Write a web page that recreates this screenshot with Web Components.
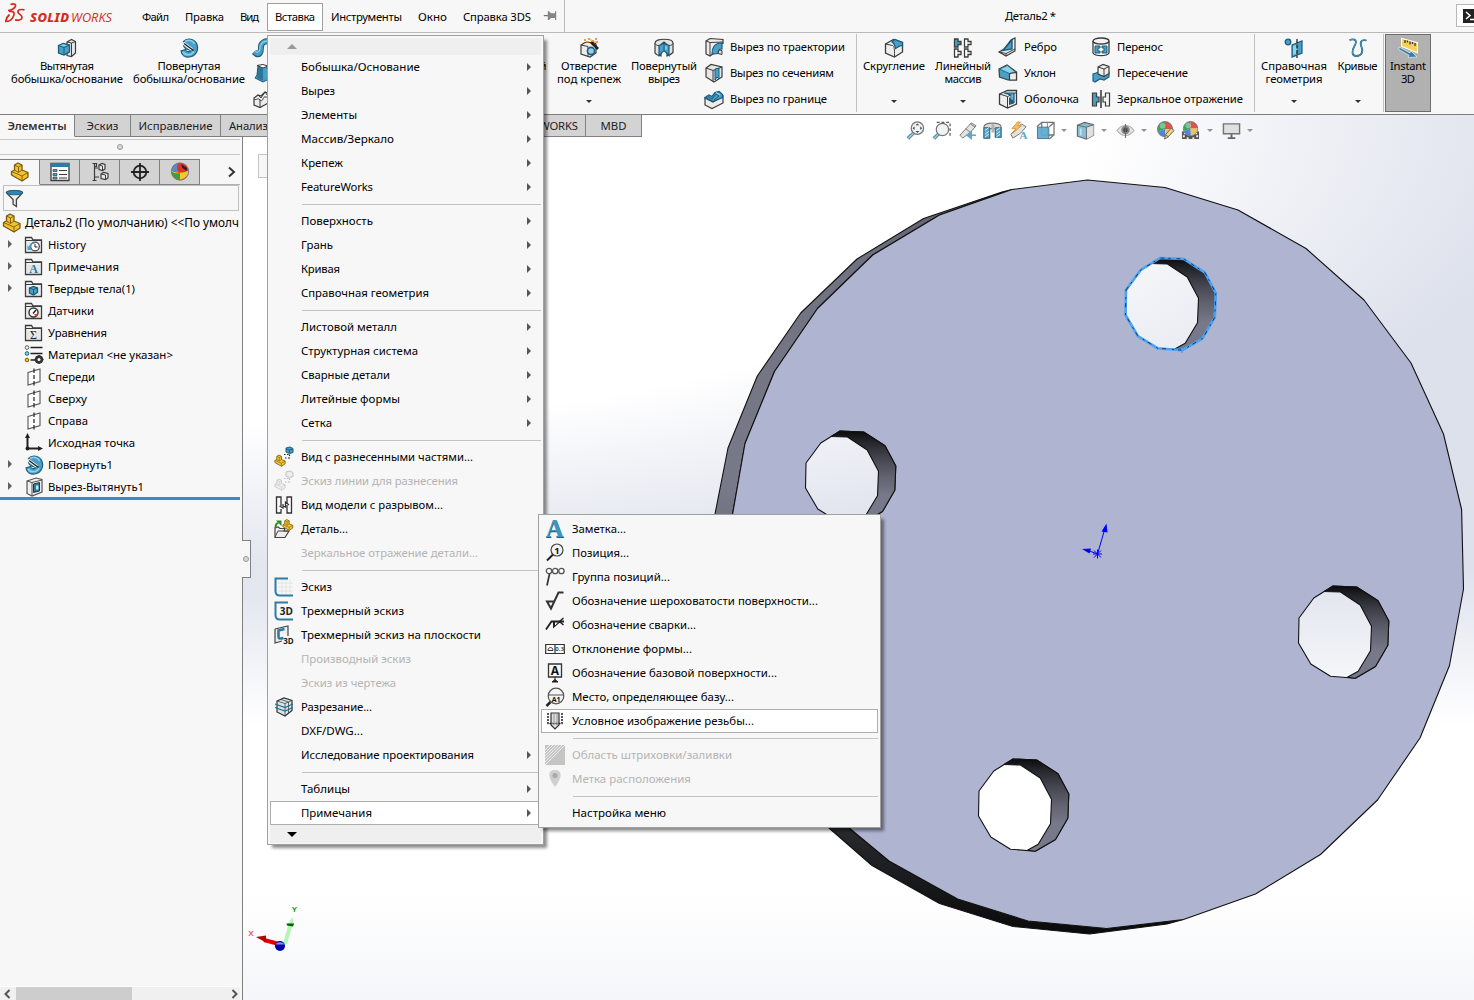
<!DOCTYPE html>
<html lang="ru">
<head>
<meta charset="utf-8">
<title>SOLIDWORKS</title>
<style>
html,body{margin:0;height:100%;overflow:hidden}
body{font:12px/16px "Noto Sans","Open Sans",sans-serif;color:#000;background:#f7f7f7}
</style>
</head>
<body>
<cad-window></cad-window>
<script>
const B='#4a9fc6',D='#1d5c7c',L='#8fd0ea',K='#3c3c3c',Y='#f2c230',YD='#7a5b10';
const folder=(inner)=>`<path d="M1.500 17.500V2.500h6l1.500 2.500h8.500v12.500z" fill="#f2f2f2" stroke="${K}" stroke-width="1.300"/><path d="M2 5.500h15" stroke="${K}"/><path d="M3 7.500h13v8.500H3z" fill="#e6e6e6"/>${inner}`;
const plane=`<path d="M4 5.500L16 2v12.500L4 18z" fill="#fdfdfd" stroke="#555" stroke-width="1.100"/><path d="M10 1.500v17.500" stroke="#222" stroke-width="1.200" stroke-dasharray="4.500 2 4 2"/>`;
const part=(s,t,c=Y,d=YD)=>`<g transform="translate(${t}) scale(${s})"><path d="M1.500 9.500L4.500 8V3L8 1l4 2v5l6 2.500v4.500l-6 4L1.500 13z" fill="${c}" stroke="${d}" stroke-width="1.300" stroke-linejoin="round"/><path d="M4.500 3L8.500 5l3.500-2M8.500 5v5.500l-4-2.500M1.500 9.500L12 14v5M12 14l6-3.500M8.500 10.500l3.500-2.500" fill="none" stroke="${d}" stroke-width=".9"/></g>`;
const revolve=`<path d="M4.500 3.500C8-.5 16 .5 18 6.500c2 6-1.500 12-7.500 12.500-4.500.4-8-2-8.500-6l4.500-1.500c.5 2.500 4.500 3 6 .5-3 .5-7.500-1.500-8-4.500z" fill="${B}" stroke="${D}" stroke-width="1.200"/><path d="M6 3.500c4-2.500 8-1 9.500 2.500M4 14c2 3.500 9 4 11-1" fill="none" stroke="${L}" stroke-width="1.600"/><path d="M4 5l9 6.500" stroke="#fff" stroke-width="2.800"/><path d="M5 5.500l9.500 7" stroke="#222" stroke-width="1.500"/>`;
const ball=`<circle cx="9.500" cy="9.500" r="8" fill="#ddd"/><path d="M9.500 9.500V1.500A8 8 0 0 0 2 12z" fill="#2a9a4a"/><path d="M9.500 9.500L2 12a8 8 0 0 0 8 5.500z" fill="#3f78d8"/><path d="M9.500 9.500V1.500a8 8 0 0 1 8 8z" fill="#de4238"/><path d="M9.500 9.500h8a8 8 0 0 1-7.500 8z" fill="#e8c050"/><circle cx="9.500" cy="9.500" r="8" fill="none" stroke="#666" stroke-width=".8"/><circle cx="7" cy="6" r="3" fill="#fff" opacity=".35"/>`;
const lens=(x,y,r)=>`<path d="M2 18.500l6-6" stroke="#39718d" stroke-width="3.600"/><path d="M2 18.500l6-6" stroke="#8cc0d8" stroke-width="1.800"/><circle cx="${x}" cy="${y}" r="${r}" fill="#edf2f4" stroke="#666" stroke-width="1.300"/>`;
const lettr=(t,x,y,s,c,w=700,f='Liberation Sans')=>`<text x="${x}" y="${y}" font-family="${f}" font-size="${s}" font-weight="${w}" text-anchor="middle" fill="${c}">${t}</text>`;
const ICONS={
extrude:`<path d="M10 4l4.500-2.500 4 2V15l-4 3.500-4.500-1z" fill="#e8e8e8" stroke="${K}" stroke-width="1.200"/><path d="M14.500 5v13M14.500 5l4-1.500M10 4l4.500 1" stroke="${K}" fill="none"/><path d="M1.500 7.500L6 5.500l6.500 1.500v7L7 17l-5.500-2z" fill="${B}" stroke="${D}" stroke-width="1.300"/><path d="M1.500 7.500L7 9.500 12.500 7M7 9.500V17" stroke="${D}" fill="none"/><path d="M3 7.400l3-1.200 4.500 1L7 8.600z" fill="${L}"/>`,
revolve,
sweep:`<path d="M2 15c6 6 7-1 7-5s4-7 9-5" fill="none" stroke="${D}" stroke-width="6"/><path d="M2.500 15c5.500 5 6.500-1 6.500-5s4-7 8.500-5" fill="none" stroke="${B}" stroke-width="4"/><path d="M3 14c4 3 5-1 5-4s4-7 9-6" fill="none" stroke="${L}" stroke-width="1.200"/>`,
loft:`<path d="M6 3h9l1 9 3 3-8 4-8-4 2-3z" fill="${B}" stroke="${D}"/><path d="M11 4v14l-6-3 1-11z" fill="${D}" opacity=".6"/><path d="M5 2.500l6-1 5 1.500-5 2z" fill="#fff" stroke="${K}"/>`,
boundary:`<path d="M2 9l4-3 3 1 4-4 5 2v8L8 18.500 2 16z" fill="#ededed" stroke="${K}" stroke-width="1.200"/><path d="M2 10c3 2 3-2 6 1s3-4 5-3 3-2 5-2M8 11v7M6 6l3 3 4-6 3 4" fill="none" stroke="${K}"/>`,
wizard:`<path d="M2 7l4-2.500h9l2 1.500v9L11 19l-9-3z" fill="#ececec" stroke="${K}" stroke-width="1.200"/><path d="M2 7l7 1.500V18" fill="none" stroke="${K}"/><circle cx="12" cy="13" r="3.600" fill="${L}" stroke="${D}" stroke-width="1.600"/><path d="M12 4l7 7" stroke="#222" stroke-width="2.800"/><path d="M5 2h2M9 1h2M13 3h2M16 1h2M7 4h3M17 4h2" stroke="#ea7a16" stroke-width="1.600"/><path d="M11 2h2M15 4h2" stroke="${Y}" stroke-width="1.500"/>`,
revcut:`<path d="M1 5c0-5 18-5 18 0v9.500c-2 2-4 3-6 3.500V6.500l-3-2.500-3 2.500V18c-3-.5-5-1.500-6-3z" fill="#e3e3e3" stroke="${K}" stroke-width="1.200"/><path d="M5 7.500l5-2 5 2v10l-5-5-5 5z" fill="${B}" stroke="${D}" stroke-width="1.200"/><path d="M10 5.500v7" stroke="${D}"/><path d="M12 8v4" stroke="${L}" stroke-width="1.500"/><path d="M1 5.500c1 1.500 2 2 4 2.200M19 5.500c-1 1.500-2 2-4 2.200" stroke="${K}" fill="none"/>`,
sweepcut:`<path d="M2 4l4-2.500 13 1v4c-5 0-8 4-8 9L6 19l-4-2z" fill="#ececec" stroke="${K}" stroke-width="1.200"/><path d="M2 4l4 1.500L19 5M6 5.500V19" fill="none" stroke="${K}"/><path d="M8 17c0-6 2-11 10-11v6c-3 0-4 1-4 4.500z" fill="${B}" stroke="${D}" stroke-width="1.200"/><path d="M15 13l3 .5v4l-4-1z" fill="#ddd" stroke="${K}"/>`,
loftcut:`<path d="M2 5l5-3.500L18 4v10l-8 5-8-5z" fill="#e6e6e6" stroke="${K}" stroke-width="1.200"/><path d="M2 5l7 2.500v11M9 7.500L18 4" fill="none" stroke="${K}"/><path d="M11 6l4-1v11l-2-2-2 3z" fill="${B}" stroke="${D}"/>`,
boundcut:`<path d="M1 9l8 4 10-6v7L8 19.500 1 16z" fill="#ececec" stroke="${K}" stroke-width="1.200"/><path d="M1 8.500l4-2.500 3 1.500 3-4 4-1 3.500 3v3L9 12.500z" fill="${B}" stroke="${D}" stroke-width="1.300"/><path d="M4 7.500l4 2.500 4-5 3 2-5 4" stroke="${D}" fill="none"/><path d="M12 3.500l4 2.500" stroke="${L}" stroke-width="1.300"/>`,
fillet:`<path d="M1.500 6l8-4.500 9 3V14l-8 5-9-4z" fill="#eee" stroke="${K}" stroke-width="1.300"/><path d="M1.500 6l7 1.500c2 1 2 3 2 11" fill="none" stroke="${K}"/><path d="M8 4l3-2.500 7.500 3v4.500c-.5-3-3-1-7 1.500-.5-3-1-5-3.500-6.500z" fill="${B}" stroke="${D}" stroke-width="1.200"/>`,
pattern:[[0,0,B],[10,0,'#fff'],[0,10,'#fff'],[10,10,'#fff']].map(([x,y,c])=>`<path transform="translate(${x} ${y}) " d="M1.500 1h3.500v2.500h3v3h-3v2.500h-3.500z" fill="${c}" stroke="${K}" stroke-width="1.300"/>`).join(''),
rib:`<path d="M1 15l5-3 7-9 4-2v13l-9 5z" fill="#eee" stroke="${K}" stroke-width="1.200"/><path d="M5 13.500L14 3v9z" fill="${B}" stroke="${D}" stroke-width="1.400"/><path d="M1 15l7 1.500 9-4.500M8 16.500V19" fill="none" stroke="${K}"/>`,
draft:`<path d="M1 6l8-4 9.500 7V17H10L1.500 14z" fill="${B}" stroke="${K}" stroke-width="1.200"/><path d="M1.500 6l8-3.500 8.500 7-6.500 1z" fill="${L}" stroke="${D}" stroke-width=".8"/><path d="M11.500 10.500l7-1V17h-7z" fill="#ededed" stroke="${K}" stroke-width="1.200"/>`,
shell:`<path d="M1.500 5l8-3.500h9V15l-9 4-8-4z" fill="#eee" stroke="${K}" stroke-width="1.300"/><path d="M1.500 5l8 2.500V19M9.500 7.500l9-4" stroke="${K}" fill="none"/><path d="M6 4h10v9l-3-1.500V6z" fill="${B}" stroke="${D}" stroke-width="1.200"/><path d="M11 8l5 4.500v2l-5 1.500z" fill="${D}"/><path d="M14 5.500v5" stroke="${L}"/>`,
wrap:`<ellipse cx="10" cy="4" rx="8" ry="3" fill="#f4f4f4" stroke="${K}" stroke-width="1.300"/><path d="M2 4v12c2 3.500 14 3.500 16 0V4" fill="none" stroke="${K}" stroke-width="1.300"/><path d="M4 9h5v2H7v3h2v2H4zM11 9h5v7h-5v-2h2v-3h-2z" fill="${B}" stroke="${D}"/>`,
intersect:`<path d="M2 11l9-3 7 1v5l-5 3-4-1-5 3-2-1z" fill="${B}" stroke="${D}" stroke-width="1.200"/><path d="M7 4l5-2.500 6 2v7l-5 3-6-2.500z" fill="#eee" stroke="${K}" stroke-width="1.200"/><path d="M7 4l6 2 5-2.500M13 6v7" stroke="${K}" fill="none"/>`,
mirror:`<path d="M1.500 4h4v4h2.500v5H5.500v4h-4z" fill="${B}" stroke="${K}" stroke-width="1.200"/><path d="M18.500 4h-4v4H12v5h2.500v4h4z" fill="#f4f4f4" stroke="${K}" stroke-width="1.200"/><path d="M10 1v18" stroke="#111" stroke-width="1.300"/>`,
refgeo:`<circle cx="4" cy="4" r="2.800" fill="${B}" stroke="${D}" stroke-width="1.300"/><path d="M8 7l10-4v12L8 19z" fill="${B}" stroke="${D}" stroke-width="1.200"/><path d="M9 8l4-1.500v9L9 17z" fill="${L}"/><path d="M13 1v19" stroke="#111" stroke-width="1.200" stroke-dasharray="4 1.500"/>`,
curves:`<path d="M1.500 2c6-2 8 1 5 6s-3 10 2 10 7-4 5-9 0-8 5-6.500" fill="none" stroke="${D}" stroke-width="1.800"/><path d="M1.500 2c6-2 8 1 5 6s-3 10 2 10 7-4 5-9 0-8 5-6.500" fill="none" stroke="${B}" stroke-width="1"/>`,
instant:`<path d="M4 1l15 4v9L4 8z" fill="${Y}" stroke="#fff" stroke-width="2"/><path d="M4 1l15 4v9L4 8z" fill="#f7d25a"/><path d="M7 2v3M9.500 2.500v2M12 3.500v3M14.500 4v2M17 5v3" stroke="#333" stroke-width="1.300"/><path d="M1 9l11 6 .8-2L19 19l-9 .5 1-2.200L1 11.500z" fill="#2f7fa8" stroke="#fff" stroke-width=".6"/>`,
zfit:lens(12,7.500,6.500)+`<path d="M12 2.500l2 2h-4zM12 12.500l2-2h-4zM7 7.500l2-2v4zM17 7.500l-2-2v4z" fill="#333"/>`,
zarea:lens(11,9,6.500)+`<path d="M5 1.500h14v14" fill="none" stroke="#444" stroke-width="1.300" stroke-dasharray="3 2"/>`,
prev:`<path d="M2 15L14 2l5 3-6 7-8 6z" fill="#e1e1e1" stroke="#666"/><path d="M8 8l5 4M13 3l5 3.500" stroke="#666"/><path d="M19 15h-6M14 11.500l-4.500 3.500 4.500 3.500z" stroke="${B}" fill="${B}" stroke-width="1.500"/>`,
section:`<path d="M1 6c1-5 17-5 18 0v11h-6V8H7v10H1z" fill="#d8d8d8" stroke="#666" stroke-width="1.200"/><path d="M1 7h6v11H1zM13 7h6v10h-6z" fill="${B}" stroke="${D}"/><path d="M2 10l4-3M2 14l4-3M2 17l4-3M14 10l4-3M14 14l4-3M14 17l4-3" stroke="#d7eef8"/><path d="M9 3l3 1v8H9z" fill="#aaa"/>`,
views:`<path d="M2 14L13 3l5 3-6 7-8 5z" fill="#e1e1e1" stroke="#666"/><path d="M9 1L3 8h4l-3 5 9-8H9l3-4z" fill="#f7b84a" stroke="#cf7e17" stroke-width=".8"/>`+lettr('A',15,18.5,12,B,700,'Liberation Serif'),
orient:`<path d="M6 6V1.500h13v13h-5M14 6l5-4.500M1 6l5-4.500M14 19l5-4.500" fill="none" stroke="#666" stroke-width="1.300"/><path d="M12 1.500v13M6 5v10h12" stroke="#777" fill="none"/><path d="M1.500 6.500h12v12h-12z" fill="${B}" stroke="${D}" opacity=".9"/>`,
display:`<path d="M1.500 4.500L9 1.500l9.500 2.500v11L11 19l-9.500-3z" fill="#7fb9d4" stroke="#555" stroke-width="1.200"/><path d="M11 6.500V19l7.500-4V4z" fill="#ddd"/><path d="M1.500 4.500L11 6.500l7.500-2.500M11 6.500V19" stroke="#555" fill="none"/><path d="M5 8v7" stroke="#b6e1f2" stroke-width="2"/>`,
eye:`<path d="M1 10c5-7 13-7 18 0-5 7-13 7-18 0z" fill="#e4e4e4" stroke="#aaa" stroke-width="1.200"/><circle cx="10" cy="9.500" r="4.500" fill="#777"/><circle cx="10" cy="9.500" r="2.300" fill="#333"/><path d="M10 3v15" stroke="#555"/>`,
appear:`<g transform="translate(0 -1)">${ball}</g><path d="M9 19l1-4.500 6-7 3 2.500-6.500 7z" fill="#f0d078" stroke="#555"/><path d="M10 14l3 3" stroke="#555"/>`,
scene:`<path d="M1 11h18v8H1z" fill="#444"/><path d="M3 13h2M15 13h2M2 16h2M6 18h2M12 18h2M16 16h2" stroke="#eee" stroke-width="2"/><g transform="translate(1 -1) scale(.95)">${ball}</g>`,
monitor:`<path d="M1.500 3h17v10.500h-17z" fill="#dedede" stroke="#666" stroke-width="1.500"/><path d="M10 14v3M6 18h8" stroke="#555" stroke-width="2"/>`,
part:part(1,'0 0'),
props:`<path d="M1 1.500h18v17H1z" fill="#fafafa" stroke="${K}" stroke-width="1.300"/><path d="M1 1h18v4H1z" fill="#2f7ba4"/><path d="M3 7.500h4v2H3zM3 11.500h4v2H3zM3 15h4v2H3z" fill="${B}" stroke="${K}" stroke-width=".7"/><path d="M9 8.500h8M9 12.500h8M9 16h8" stroke="${K}" stroke-width="1.200"/>`,
config:`<path d="M4.500 1v17.500M4.500 6H8M4.500 15H9M2.500 1.500h4v3h-2M2.500 18.500h4" stroke="${K}" stroke-width="1.200" fill="none"/><path d="M9 3l3-1.500 3 1V7l-2.500 1.500L9 7.500zM11 12l2.500-1.500 4.500 1v4.500l-2.500 1.500-4.500-1z" fill="#e8e8e8" stroke="${K}" stroke-width="1.200"/><path d="M9 3l3.500 1V8M11 12l4.500 1V17" stroke="${K}" fill="none"/>`,
target:`<circle cx="10" cy="10" r="6.300" fill="none" stroke="#222" stroke-width="1.800"/><path d="M10 1v18M1 10h18" stroke="#222" stroke-width="1.800"/>`,
ball:`<circle cx="10" cy="9.500" r="8.700" fill="#e33026"/><path d="M1.500 8.500c5 3 11 3 17 0a8.700 8.700 0 0 1-17 3z" fill="#f1cc28"/><path d="M1.500 9.500c3 2 6 2 8.500 1.500V18a8.700 8.700 0 0 1-8.500-8.500z" fill="#3f9e3a"/><path d="M1.500 8a8.700 8.700 0 0 1 7-7c-2 3-2 6 0 9-3 0-5 0-7-2z" fill="#4a8fd0"/><path d="M11 2l6 4-.5 3-4-3z" fill="#222"/><circle cx="10" cy="9.500" r="8.700" fill="none" stroke="#777" stroke-width=".8"/>`,
filter:`<path d="M1.500 4c0-3 17-3 17 0l-6.500 7v7.500L8.500 16v-5z" fill="#eee" stroke="#444" stroke-width="1.400"/><ellipse cx="10" cy="3.800" rx="8.500" ry="2.300" fill="#2f88b3" stroke="${D}"/>`,
fhist:folder(`<circle cx="11" cy="11.500" r="4.300" fill="#fff" stroke="#444" stroke-width="1.200"/><path d="M11 9v3h2.500" stroke="#222" fill="none"/><path d="M3.500 10.500v4.500h5z" fill="${B}"/><path d="M5.500 12.500c1-4.500 3-4.500 5-4.500" stroke="${B}" stroke-width="1.700" fill="none"/>`),
fnote:folder(lettr('A',9.5,16,12,'#2a7ba3',700,'Liberation Serif')),
fsolid:folder(`<path d="M5.500 9l4-1.500L13.500 9v4.500l-4 2.500-4-2z" fill="${B}" stroke="${D}" stroke-width="1.300"/><path d="M5.500 9l4 1.500 4-1.500M9.500 10.500V16" stroke="${D}" fill="none"/>`),
fsensor:folder(`<circle cx="9.500" cy="11.500" r="4.500" fill="#fff" stroke="#333" stroke-width="1.400"/><path d="M9 12.500l3-3.500" stroke="#222" stroke-width="1.500"/><path d="M10 13h4l-2 3z" fill="#e0401c"/>`),
fsum:folder(lettr('Σ',9.5,16,12,'#222',400,'Liberation Serif')),
material:`<path d="M6.500 2.500h12M6.500 8.500h12M6.500 15h5" stroke="#222" stroke-width="1.600"/><circle cx="3" cy="2.500" r="1.800" fill="#fff" stroke="#555"/><circle cx="3" cy="8.500" r="1.800" fill="${L}" stroke="${D}"/><circle cx="3" cy="15" r="1.800" fill="${Y}" stroke="${YD}"/><circle cx="15" cy="14.500" r="3" fill="none" stroke="#333" stroke-width="2.500"/><path d="M15 10v9M10.500 14.500h9M12 11.500l6 6M18 11.500l-6 6" stroke="#333" stroke-width="1.300"/><circle cx="15" cy="14.500" r="1.500" fill="#fff"/>`,
plane,
origin:`<path d="M3.500 16V3M3.500 15.500H16" stroke="#222" stroke-width="2" fill="none"/><path d="M3.500 0l2.500 5H1zM19 15.500l-5-2.500v5z" fill="#222"/><circle cx="3.500" cy="15.500" r="2" fill="#222"/>`,
cutx:`<path d="M3 4l9-3 6 1.500V15L8 19l-5-2.500z" fill="#efefef" stroke="#555" stroke-width="1.200"/><path d="M3 4l5 1.500L18 3M8 5.500V19" fill="none" stroke="#555"/><path d="M9.500 7l6-1.500v8.500l-6 1.500z" fill="#2f7ba4" stroke="#333"/><path d="M12 8.500h2.500v4H12z" fill="#bfe4f4"/>`,
explode:part(.62,'0 7.500')+`<path d="M12 1l4-1 3 1.500v4l-3.500 1L12 5z" fill="${B}" stroke="${D}"/><path d="M12 2l3.500 1L19 2M15.500 3v3" fill="none" stroke="${D}"/><path d="M10 7.500l5 0M15.500 7.500v4M11 11h4" stroke="#222" stroke-width="1.200" stroke-dasharray="1.500 1.500"/>`,
explodeoff:part(.62,'0 7.500','#f0f0f0','#c3c3c3')+`<path d="M12 1l4-1 3 1.500v4l-3.500 1L12 5z" fill="#eee" stroke="#c3c3c3"/><path d="M10 7.500h5M15.500 7.500v4M11 11h4" stroke="#bbb" stroke-width="1.200" stroke-dasharray="1.500 1.500"/>`,
breakv:`<path d="M7 11V2H2.500v16H7v-4M13 8V2h4.500v16H13v-8" fill="#fafafa" stroke="#333" stroke-width="1.300"/><path d="M5.500 11l3.500 2V9M15 10l-3.500-3v5L9 11" fill="none" stroke="#333" stroke-width="1.200"/>`,
insert:`<path d="M1 18V9l3-1 2 1.500h5L10 12h5l-4 6.500H1z" fill="#eee" stroke="#444" stroke-width="1.200"/><path d="M1 18l3-6h10" fill="none" stroke="#444"/>`+part(.6,'8 0')+`<path d="M1.500 9c0-4 1-5 3-5" stroke="#2e8b1d" stroke-width="2" fill="none"/><path d="M2 1.500h5.500V7z" fill="#2e8b1d"/>`,
sketch:`<path d="M8 2v15M12 2v15M16 2v15M4 6h15M4 10h15M4 14h15" stroke="#e0e0e0" stroke-width=".8"/><path d="M14 1.500H1.500V14c0 3 1.500 4.500 4.500 4.500h13" fill="none" stroke="#2c7ca6" stroke-width="2"/>`,
sketch3:`<path d="M14 1.500H1.500V14c0 3 1.500 4.500 4.500 4.500h13" fill="none" stroke="#2c7ca6" stroke-width="2"/>`+lettr('3D',12.3,14.2,10,'#222',700,'Open Sans'),
sketchp:`<path d="M1 4l13-3v10M1 4v14l7-2" fill="#eee" stroke="#444" stroke-width="1.200"/><path d="M10.500 4L4.500 5.500v6c0 2 1 2.500 5 1.500" fill="none" stroke="#2c7ca6" stroke-width="2.600"/>`+lettr('3D',14.5,19,8,'#222',700,'Open Sans'),
slice:`<path d="M3 4l7-3 8 2.500v10L11 19l-8-4z" fill="#d9e6ec" stroke="#333" stroke-width="1.200"/><path d="M3 4l8 2.500 7-3M11 6.500V19M7 2.500l7.500 2.500v12" fill="none" stroke="#444" stroke-width=".8"/><path d="M1 7l10 3.500L19 7M1 10.500L11 14l8-3.500" fill="none" stroke="#2c6c8c" stroke-width="1.300"/>`,
note:lettr('A',10,18.5,25,D,700,'Liberation Serif')+lettr('A',9.5,18,24.5,'#3f97bf',700,'Liberation Serif'),
balloon:`<circle cx="12" cy="7" r="6" fill="#f3f3f3" stroke="#444" stroke-width="1.200"/><path d="M8 11.500L2 17.500" stroke="#222" stroke-width="2"/>`+lettr('1',12,10.5,9.5,'#111',700,'Open Sans'),
balloons:`<circle cx="4" cy="4" r="2.700" fill="#fff" stroke="#555" stroke-width="1.300"/><circle cx="10.200" cy="4" r="2.700" fill="#fff" stroke="#555" stroke-width="1.300"/><circle cx="16.400" cy="4" r="2.700" fill="#fff" stroke="#555" stroke-width="1.300"/><path d="M4.500 7L2 18.500" stroke="#333" stroke-width="1.700"/>`,
rough:`<path d="M18.500 1.500h-5L6 17.500 2 10.500h7" fill="none" stroke="#333" stroke-width="2"/>`,
weld:`<path d="M1 14.500L6.500 6.500H19" fill="none" stroke="#222" stroke-width="1.800"/><path d="M8 6.500v7l8-7z" fill="#222"/><path d="M10 7.500v3l3-3z" fill="#f7f7f7"/><path d="M18.500 3l-4 3.500 4 3.500" fill="none" stroke="#222" stroke-width="1.500"/>`,
gtol:`<path d="M.700 5.500h18.600v9H.700zM10 5.500v9" fill="#fafafa" stroke="#333" stroke-width="1.200"/><path d="M3 11.500c0-4 5-4 5 0z" fill="none" stroke="#333"/>`+lettr('0.3',14.6,12.4,6,'#222',600,'Open Sans'),
datum:`<path d="M3.500 1h13v13h-13z" fill="#fafafa" stroke="#333" stroke-width="1.300"/><path d="M10 14v3M7 19h6L10 16.500z" stroke="#222" fill="#222"/>`+lettr('A',10,11.8,12,'#111',700,'Open Sans'),
dtarget:`<path d="M5.500 15L1.500 19" stroke="#222" stroke-width="2.500"/><circle cx="11" cy="9" r="7.800" fill="#f4f4f4" stroke="#555" stroke-width="1.200"/><path d="M3.200 8h15.600" stroke="#555"/>`+lettr('A1',11.2,14.8,7,'#111',700,'Open Sans'),
thread:`<path d="M6 2h8v12l-4 4-4-4z" fill="#ddd" stroke="#333" stroke-width="1.200"/><path d="M3 2v10.500h14V2" fill="none" stroke="#222" stroke-width="1.500" stroke-dasharray="2 1"/><path d="M9 3v11M12 3v11" stroke="#999"/>`,
hatch:`<path d="M0 0h20v20H0z" fill="#c5c5c5"/><path d="M0 8l8-8M0 11L11 0M0 14L14 0M0 17L17 0M0 5l5-5M0 20L20 0" stroke="#ececec"/>`,
pinmap:`<path d="M10 1c8 0 7 8 0 17C3 9 2 1 10 1z" fill="#cfcfcf"/><circle cx="10" cy="6.500" r="2.600" fill="#aaa"/>`,
pin:`<path d="M1 9.500h6" stroke="#777" stroke-width="1.600"/><path d="M6 4v11h1.500l2.500-2.500h5V15h1.500V4H15v2.500h-5L7.500 4z" fill="#858585"/>`
};

const make=(name,html)=>customElements.define(name,class extends HTMLElement{
 connectedCallback(){ if(this.shadowRoot)return;
  const t=document.createElement('template');
  t.innerHTML=typeof html==='function'?html(this):html;
  this.attachShadow({mode:'open'}).appendChild(t.content.cloneNode(true));
 }});
const a=(e,n,d='')=>e.getAttribute(n)??d;
const ic=(n,s=20)=>`<cad-icon name="${n}" size="${s}"></cad-icon>`;
const ft=(t,w)=>`<fit-text w="${w}">${t}</fit-text>`;

make('cad-icon',e=>{const s=a(e,'size','20');return `<style>:host{display:block;flex:none;width:${s}px;height:${s}px}svg{display:block;overflow:visible}</style><svg width="${s}" height="${s}" viewBox="0 0 20 20">${ICONS[a(e,'name')]||''}</svg>`});

make('brand-logo',`<style>:host{display:flex;align-items:center;width:129px;height:32px;padding-left:5px;color:#d9281e;font-style:italic;font-size:13px}svg{margin-right:5px}.s{font-weight:800;margin-right:2px}.w{font-family:"Open Sans";font-weight:400}fit-text{margin-top:1px}</style>
<svg width="20" height="20" viewBox="0 0 20 20" style="margin-top:-6px"><g fill="none" stroke="#d9281e" stroke-width="1.700"><path d="M5.500 1.500c4-1.500 6 0 4.500 2.500S4.500 7.500 3 7.500"/><path d="M4 8.500c4.500-.8 6 1 4.500 4.500C7 17 3.500 18.500.8 18.500c0-3 1.500-5 3.700-7"/><path d="M19.500 6.800c-4-.8-7 0-6.500 2.500.3 1.500 4.500 3 4 5.500-.5 2.500-4 2.700-7 2"/></g></svg><fit-text class="s" w="39">SOLID</fit-text><fit-text class="w" w="41">WORKS</fit-text>`);

make('menu-entry',e=>`<style>:host{display:flex;align-items:center;padding:0 8px;height:28px;margin:3px 0 0}:host([open]){padding:0 7px;border:1px solid #a0a0a0;background:#fff;height:26px}</style>${ft(a(e,'label'),a(e,'w'))}`);

make('app-bar',`<style>:host{display:flex;height:32px;border-bottom:1px solid #bababa;background:#f7f7f7}
.pin{width:25px;border-right:1px solid #bababa;display:flex;align-items:center}.pin cad-icon{margin:0 0 1px 4px}
.title{display:flex;align-items:center;margin-left:440px;height:31px}.cmd{margin:4px 0 0 auto;width:17px;height:21px;border:1px solid #b8b8b8;border-right:0;background:#fff;display:flex;align-items:center;justify-content:flex-end}</style>
<brand-logo></brand-logo>
<menu-entry label="Файл" w="27"></menu-entry><menu-entry label="Правка" w="39"></menu-entry><menu-entry label="Вид" w="19"></menu-entry><menu-entry open label="Вставка" w="40"></menu-entry><menu-entry label="Инструменты" w="71"></menu-entry><menu-entry label="Окно" w="29"></menu-entry><menu-entry label="Справка 3DS" w="68"></menu-entry>
<div class="pin">${ic('pin',16)}</div><div class="title">${ft('Деталь2 *',51)}</div>
<div class="cmd"><svg width="11" height="14" viewBox="0 0 11 14"><path d="M0 0h11v14H0z" fill="#222"/><path d="M3 3l4 3.500L3 10M7 10.500h4" stroke="#fff" stroke-width="1.500" fill="none"/></svg></div>`);

make('ribbon-button',e=>{const ls=a(e,'lines').split('|').map(s=>s.split(':'));return `<style>:host{display:flex;flex-direction:column;align-items:center;width:${a(e,'bw')}px;height:78px;padding-top:5px;box-sizing:border-box;flex:none;line-height:13px}
:host([pressed]){background:#b1b1b1;border:1px solid #6c6c6c;padding-top:3px;margin-top:1px}cad-icon{margin-bottom:1px;height:20px}
.c{margin-top:auto;margin-bottom:8px;border:3px solid transparent;border-top-color:#333;border-bottom:0}</style>${ic(a(e,'icon'))}${ls.map(l=>ft(l[0],l[1])).join('')}${e.hasAttribute('caret')?'<span class="c"></span>':''}`});
make('ribbon-tool',e=>`<style>:host{display:flex;align-items:center;gap:6px;height:26px}</style>${ic(a(e,'icon'))}${e.hasAttribute('label')?ft(a(e,'label'),a(e,'w')):''}`);
make('ribbon-stack',e=>`<style>:host{display:flex;flex-direction:column;flex:none;padding-top:1px;width:${a(e,'bw')}px}</style><slot></slot>`);
make('cad-ribbon',`<style>:host{display:flex;height:81px;background:#f7f7f7;border-bottom:1px solid #7e7e7e;padding-left:6px}i{width:1px;flex:none;background:#c0c0c0;height:78px;margin-top:1px}</style>
<ribbon-button bw="122" icon="extrude" lines="Вытянутая:54|бобышка/основание:112"></ribbon-button><ribbon-button bw="122" icon="revolve" lines="Повернутая:63|бобышка/основание:112"></ribbon-button>
<ribbon-stack bw="232" style="margin-left:2px"><ribbon-tool icon="sweep"></ribbon-tool><ribbon-tool icon="loft"></ribbon-tool><ribbon-tool icon="boundary"></ribbon-tool></ribbon-stack>
<ribbon-button bw="65" icon="" lines="Вытянутый:60"></ribbon-button>
<ribbon-button bw="80" icon="wizard" caret lines="Отверстие:56|под крепеж:64"></ribbon-button><ribbon-button bw="70" icon="revcut" lines="Повернутый:66|вырез:32"></ribbon-button>
<ribbon-stack bw="152" style="margin-left:5px"><ribbon-tool icon="sweepcut" label="Вырез по траектории" w="115"></ribbon-tool><ribbon-tool icon="loftcut" label="Вырез по сечениям" w="104"></ribbon-tool><ribbon-tool icon="boundcut" label="Вырез по границе" w="97"></ribbon-tool></ribbon-stack><i></i>
<ribbon-button bw="74" icon="fillet" caret lines="Скругление:62"></ribbon-button><ribbon-button bw="64" icon="pattern" caret lines="Линейный:56|массив:37"></ribbon-button>
<ribbon-stack bw="93" style="margin-left:3px"><ribbon-tool icon="rib" label="Ребро" w="33"></ribbon-tool><ribbon-tool icon="draft" label="Уклон" w="32"></ribbon-tool><ribbon-tool icon="shell" label="Оболочка" w="55"></ribbon-tool></ribbon-stack>
<ribbon-stack bw="163"><ribbon-tool icon="wrap" label="Перенос" w="46"></ribbon-tool><ribbon-tool icon="intersect" label="Пересечение" w="71"></ribbon-tool><ribbon-tool icon="mirror" label="Зеркальное отражение" w="126"></ribbon-tool></ribbon-stack><i></i>
<ribbon-button bw="78" icon="refgeo" caret lines="Справочная:66|геометрия:57"></ribbon-button><ribbon-button bw="49" icon="curves" caret lines="Кривые:40"></ribbon-button><i style="margin:1px 1px 0"></i>
<ribbon-button pressed bw="46" icon="instant" lines="Instant:36|3D:14"></ribbon-button>`);

make('command-tab',e=>`<style>:host{display:flex;align-items:center;justify-content:${a(e,'align','center')};box-sizing:border-box;height:22px;width:${a(e,'bw')}px;background:#d3d3d3;border-right:1px solid #808080;border-bottom:1px solid #808080;color:#222;flex:none}:host([active]){background:#f7f7f7;font-weight:600;color:#333;border-bottom-color:#f7f7f7}fit-text{margin:0 ${a(e,'pad','0')}px}</style>${ft(a(e,'label'),a(e,'w'))}`);
make('command-tabs',`<style>:host{display:flex;height:22px;width:642px}</style>
<command-tab active bw="75" label="Элементы" w="59"></command-tab><command-tab bw="56" label="Эскиз" w="32"></command-tab><command-tab bw="90" label="Исправление" w="74"></command-tab><command-tab bw="178" align="flex-start" pad="8" label="Анализ" w="39"></command-tab><command-tab bw="187" align="flex-end" pad="7" label="SOLIDWORKS" w="71"></command-tab><command-tab bw="56" label="MBD" w="26"></command-tab>`);

make('tree-row',e=>`<style>:host{display:flex;align-items:center;height:22px;padding-left:8px}:host([root]){padding-left:2px}b{width:0;height:0;border:4px solid transparent;border-left:4px solid #606060;border-right:0;margin:-2px 12px 0 0;visibility:${e.hasAttribute('kids')?'visible':'hidden'}}:host([root]) b{display:none}cad-icon{margin-right:4px}:host([root]) cad-icon{margin-right:3px}:host([root]) fit-text{margin-top:-1px}</style><b></b>${ic(a(e,'icon'))}<fit-text w="${a(e,'w')}"><slot></slot></fit-text>`);
make('panel-tab',e=>`<style>:host{display:flex;align-items:center;justify-content:center;box-sizing:border-box;width:40px;height:26px;border:1px solid #808080;border-left:0;background:#d3d3d3}:host([active]){background:#f7f7f7;border-bottom-color:transparent}</style>${ic(a(e,'icon'))}`);
make('feature-panel',`<style>:host{display:flex;flex-direction:column;box-sizing:border-box;width:243px;background:#f7f7f7;border-right:1px solid #808080;position:relative;overflow:visible}
.grip{height:14px;margin-top:2px;width:240px;border-top:1px solid #c8c8c8;border-bottom:1px solid #c8c8c8;display:flex;align-items:center;justify-content:center}.dot{width:4px;height:4px;border:1px solid #999;border-radius:50%;background:#d8d8d8}
.tabs{display:flex;margin-top:4px;width:240px;height:26px}.rest{flex:1;border-bottom:1px solid #b0b0b0;display:flex;align-items:center;justify-content:flex-end;padding-right:3px}
.filter{height:24px;margin:0 0 0 3px;width:234px;border:1px solid #c0c0c0;display:flex;align-items:center}.filter cad-icon{margin-left:1px}
.tree{width:240px;overflow:hidden;margin-top:1px}.bar{width:240px;height:3px;background:#3a8cc6;margin-top:-1px}
.scroll{margin-top:auto;width:240px;height:13px;border-top:1px solid #fff;background:#f0f0f0;display:flex;align-items:center;justify-content:space-between}.thumb{width:116px;height:13px;background:#cdcdcd;margin-right:auto}
.handle{position:absolute;left:242px;top:403px;width:8px;height:36px;border:1px solid #808080;border-left:0;background:#f7f7f7;display:flex;align-items:center;justify-content:center}</style>
<div class="grip"><span class="dot"></span></div>
<div class="tabs"><panel-tab active icon="part"></panel-tab><panel-tab icon="props"></panel-tab><panel-tab icon="config"></panel-tab><panel-tab icon="target"></panel-tab><panel-tab icon="ball"></panel-tab><div class="rest"><svg width="10" height="12" viewBox="0 0 10 12"><path d="M2 1.500l5 4.500-5 4.500" stroke="#333" stroke-width="2" fill="none"/></svg></div></div>
<div class="filter">${ic('filter',19)}</div>
<div class="tree"><tree-row root icon="part" w="214">Деталь2 (По умолчанию) &lt;&lt;По умолч</tree-row>
<tree-row kids icon="fhist" w="38">History</tree-row><tree-row kids icon="fnote" w="71">Примечания</tree-row><tree-row kids icon="fsolid" w="87">Твердые тела(1)</tree-row><tree-row icon="fsensor" w="46">Датчики</tree-row><tree-row icon="fsum" w="59">Уравнения</tree-row><tree-row icon="material" w="125">Материал &lt;не указан&gt;</tree-row><tree-row icon="plane" w="47">Спереди</tree-row><tree-row icon="plane" w="39">Сверху</tree-row><tree-row icon="plane" w="40">Справа</tree-row><tree-row icon="origin" w="87">Исходная точка</tree-row><tree-row kids icon="revolve" w="65">Повернуть1</tree-row><tree-row kids icon="cutx" w="96">Вырез-Вытянуть1</tree-row></div>
<div class="bar"></div>
<div class="scroll"><svg width="16" height="13"><path d="M9.500 3L5.500 7l4 4" stroke="#555" stroke-width="2" fill="none"/></svg><span class="thumb"></span><svg width="10" height="13"><path d="M2.500 3l4 4-4 4" stroke="#555" stroke-width="2" fill="none"/></svg></div>
<div class="handle"><span class="dot"></span></div>`);

make('view-toolbar',()=>{const g=[['zfit',915],['zarea',941],['prev',967],['section',992.5],['views',1018.5],['orient',1045],['',1064],['display',1085.5],['',1104],['eye',1125],['',1144],['appear',1165],['scene',1190.5],['',1210],['monitor',1231],['',1250]];
let x=905,h='';for(const [n,c] of g){const w=n?19:6,l=c-w/2;h+=`<span style="margin-left:${l-x}px">${n?ic(n,19):'<b></b>'}</span>`;x=l+w}
return `<style>:host{position:absolute;left:662px;top:5px;display:flex;align-items:center;height:20px;opacity:.9}span{flex:none}b{display:block;width:0;border:3px solid transparent;border-top-color:#888;border-bottom:0}</style>${h}`});

const pts=s=>s.map(p=>p.join(' ')).join('L');
const front=[[1087.5,180],[1165,187.5],[1238,210],[1306,248.5],[1364,300],[1411,363],[1443.5,434],[1461.6,509.5],[1463.5,589],[1449.5,665.5],[1420,738],[1377.5,800],[1320.5,854.5],[1255.5,894],[1183.5,919.5],[1106.7,928.5],[1028,921],[957.6,899],[889,861],[848,827],[800,780],[756,700],[733,620],[728,560],[732.6,514],[745,443.5],[774.5,371.5],[817.5,308.5],[872.7,255],[939.5,215],[1012,189.5]];
const back=[[1012,189.5],[1002,192],[923.6,218.5],[857,259],[800.7,313],[757.3,376],[728,448],[715,514],[712,600],[727,680],[765,758],[829,828],[872,865.5],[939.5,903.5],[1013,926.5],[1089.5,934],[1167,924],[1183.5,919.5]];
const ho=[[.5,32],[15.3,12],[25.7,5.5],[34.5,0],[58.2,1],[79.5,14.7],[90.3,35],[89.3,59.3],[77,80.5],[56.8,92.2],[32,90.2],[12.3,78],[0,57]];
const wall=[[25.7,5.5],[34.5,0],[58.2,1],[79.5,14.7],[90.3,35],[89.3,59.3],[77,80.5],[56.8,92.2],[48.9,91.2],[59.7,85.3],[72,64.7],[73,40.2],[61.7,19],[42,6]];
const holes=[[1125.5,258],[805.5,431],[1298.5,586],[978.5,759]];
const sh=(p,[x,y])=>p.map(q=>[+(q[0]+x).toFixed(1),+(q[1]+y).toFixed(1)]);
make('cad-viewport',`<style>:host{display:block;position:relative;overflow:hidden;background:linear-gradient(#fff0 450px,#fff 610px,#fff 780px,#f5f6f9 885px),radial-gradient(ellipse 1000px 365px at 0 0,#fff 85%,#f1f2f7 104%,#dde1ec 132%)}
svg.m{display:block}.fly{position:absolute;left:15px;top:39px;width:20px;height:22px;border:1px solid #c4c4c4;background:#f7f7f7}</style>
<svg class="m" width="1231" height="885" viewBox="243 115 1231 885"><defs><linearGradient id="w" x1="0" y1="0" x2="0" y2="1"><stop offset="0" stop-color="#0c0c0e"/><stop offset=".12" stop-color="#25262c"/><stop offset=".3" stop-color="#454650"/><stop offset=".5" stop-color="#62636f"/><stop offset=".7" stop-color="#777889"/><stop offset="1" stop-color="#777889"/></linearGradient><linearGradient id="s" x1="0" y1="0" x2="0" y2="1"><stop offset="0" stop-color="#1b1b1e"/><stop offset=".03" stop-color="#62636f"/><stop offset=".1" stop-color="#717281"/><stop offset=".4" stop-color="#787989"/><stop offset=".75" stop-color="#4a4b55"/><stop offset=".87" stop-color="#26272b"/><stop offset="1" stop-color="#0a0a0b"/></linearGradient></defs>
<g stroke="#111" stroke-width="1.100" stroke-linejoin="round"><path d="M${pts(back.concat(front.slice(15,31)))}Z" fill="url(#s)"/>
<path fill-rule="evenodd" fill="#afb4d0" d="M${pts(front)}Z${holes.map(o=>'M'+pts(sh(ho,o))+'Z').join('')}"/>
${holes.map(o=>`<path fill="url(#w)" d="M${pts(sh(wall,o))}Z"/>`).join('')}</g>
<path d="M${pts(sh(ho,holes[0]))}Z" fill="none" stroke="#4aa3f5" stroke-width="2.600"/><path d="M${pts(sh(ho,holes[0]))}Z" fill="none" stroke="#0b1c30" stroke-width=".8" stroke-dasharray="4 4 2 6"/><path d="M1182 348v5" stroke="#4aa3f5" stroke-width="1.500"/>
<g stroke="#00f" fill="#00f"><path d="M1097.500 554l7-24M1097.500 554l-8-3M1093 554h9M1097.500 549.500v9M1094 550.500l7 7M1101 550.500l-7 7" stroke-width="1"/><path d="M1106.500 523.500l1 9-6-1zM1082 549l9-.5-1.500 5z" stroke="none"/></g>
<path d="M285 944l6-21" stroke="#b4f5b4" stroke-width="4"/><path d="M292.500 917l-5 8h6.500z" fill="#b4f5b4"/><path d="M286.500 923.500h7.500l-1 3-6-1z" fill="#006200"/><path d="M279 944l-15-4" stroke="#e00000" stroke-width="4"/><path d="M256 937l10-1.500v7z" fill="#b80000"/><circle cx="280" cy="946" r="5" fill="#0000a8"/><path d="M275.500 944.500c2-3 7-3 9 0z" fill="#8e8ee8"/>
<text x="294.500" y="912" font-size="8" font-weight="700" font-family="Liberation Sans" text-anchor="middle" fill="#149414">Y</text><text x="251" y="935.500" font-size="8" font-weight="700" font-family="Liberation Sans" text-anchor="middle" fill="#f55">X</text></svg>
<div class="fly"></div><view-toolbar></view-toolbar>`);

make('menu-item',e=>`<style>:host{display:flex;align-items:center;height:24px;box-sizing:border-box;padding-right:9px;color:${e.hasAttribute('off')?'#b4b4b4':'#000'};border:1px solid transparent}:host([hot]){background:#fff;border-color:#adadad}
.i{width:30px;flex:none;display:flex;justify-content:center;box-sizing:border-box;padding-right:4px}b{margin-left:auto;border:4px solid transparent;border-left:4px solid #555;border-right:0}</style><span class="i">${e.hasAttribute('icon')?ic(a(e,'icon')):''}</span><fit-text w="${a(e,'w')}"><slot></slot></fit-text>${e.hasAttribute('sub')?'<b></b>':''}`);
make('menu-separator',`<style>:host{display:block;height:10px;box-sizing:border-box;padding:5px 0 0 32px}i{display:block;height:1px;background:#c3c3c3}</style><i></i>`);
make('popup-menu',e=>`<style>:host{position:absolute;box-sizing:border-box;border:1px solid #a0a0a0;background:#f7f7f7;padding:1px 2px;box-shadow:4px 4px 3px -1px rgba(0,0,0,.45);z-index:2}.z{background:#efefef;height:17px;display:flex;align-items:center;padding-left:17px}.z.t{margin-top:1px}.z.e{height:18px;margin-bottom:1px}u{border:5px solid transparent;border-bottom-color:#999;border-top:0}.e u{border:5px solid transparent;border-top-color:#000;border-bottom:0}</style>${e.hasAttribute('scrolling')?'<div class="z t"><u></u></div>':''}<slot></slot>${e.hasAttribute('scrolling')?'<div class="z e"><u></u></div>':''}`);

const mi=(t,w,o='')=>`<menu-item w="${w}" ${o}>${t}</menu-item>`,sp='<menu-separator></menu-separator>';
make('cad-window',`<style>:host{display:flex;flex-direction:column;width:1474px;height:1000px;position:relative;overflow:hidden}
.work{flex:1;display:grid;grid-template:22px 863px/243px 1231px}command-tabs{grid-area:1/1/2/3;z-index:1}feature-panel{grid-area:2/1;z-index:1}cad-viewport{grid-area:1/2/3/3}
.main{left:267px;top:35px;width:277px;height:810px}.side{left:538px;top:514px;width:343px;height:314px;z-index:3;padding:2px}</style>
<app-bar></app-bar><cad-ribbon></cad-ribbon>
<div class="work"><command-tabs></command-tabs><feature-panel></feature-panel><cad-viewport></cad-viewport></div>
<popup-menu class="main" scrolling>${[mi('Бобышка/Основание',119,'sub'),mi('Вырез',34,'sub'),mi('Элементы',56,'sub'),mi('Массив/Зеркало',93,'sub'),mi('Крепеж',42,'sub'),mi('FeatureWorks',72,'sub'),sp,
mi('Поверхность',72,'sub'),mi('Грань',32,'sub'),mi('Кривая',39,'sub'),mi('Справочная геометрия',128,'sub'),sp,
mi('Листовой металл',96,'sub'),mi('Структурная система',117,'sub'),mi('Сварные детали',89,'sub'),mi('Литейные формы',99,'sub'),mi('Сетка',31,'sub'),sp,
mi('Вид с разнесенными частями...',172,'icon="explode"'),mi('Эскиз линии для разнесения',157,'off icon="explodeoff"'),mi('Вид модели с разрывом...',142,'icon="breakv"'),mi('Деталь...',47,'icon="insert"'),mi('Зеркальное отражение детали...',177,'off'),sp,
mi('Эскиз',31,'icon="sketch"'),mi('Трехмерный эскиз',103,'icon="sketch3"'),mi('Трехмерный эскиз на плоскости',180,'icon="sketchp"'),mi('Производный эскиз',110,'off'),mi('Эскиз из чертежа',95,'off'),mi('Разрезание...',71,'icon="slice"'),mi('DXF/DWG...',62),mi('Исследование проектирования',173,'sub'),sp,
mi('Таблицы',49,'sub'),mi('Примечания',71,'sub hot')].join('')}</popup-menu>
<popup-menu class="side">${[mi('Заметка...',54,'icon="note"'),mi('Позиция...',57,'icon="balloon"'),mi('Группа позиций...',98,'icon="balloons"'),mi('Обозначение шероховатости поверхности...',246,'icon="rough"'),mi('Обозначение сварки...',124,'icon="weld"'),mi('Отклонение формы...',120,'icon="gtol"'),mi('Обозначение базовой поверхности...',205,'icon="datum"'),mi('Место, определяющее базу...',162,'icon="dtarget"'),mi('Условное изображение резьбы...',182,'hot icon="thread"'),sp,
mi('Область штриховки/заливки',160,'off icon="hatch"'),mi('Метка расположения',119,'off icon="pinmap"'),sp,mi('Настройка меню',94)].join('')}</popup-menu>`);

/* fit-text makes its run fill the width given in w: a slightly smaller size first, glyph spacing for the rest */
customElements.define('fit-text',class extends HTMLElement{
 connectedCallback(){ if(this.shadowRoot)return;
  this.attachShadow({mode:'open'}).innerHTML='<style>:host{display:block;white-space:nowrap;flex:none}span{display:inline-block}</style><span><slot></slot></span>';
  const s=this.shadowRoot.querySelector('span'),w=+this.getAttribute('w');
  const slot=this.querySelector('slot');
  const text=slot?slot.assignedNodes().map(n=>n.textContent).join(''):this.textContent;
  const n=text.trim().length;let nat=s.getBoundingClientRect().width;
  if(!w||n<2||!nat)return;
  if(nat>w){const f=parseFloat(getComputedStyle(this).fontSize);s.style.fontSize=(f*Math.max(w/nat,.94)).toFixed(2)+'px';nat=s.getBoundingClientRect().width;}
  const d=(w-nat)/(n-1);s.style.letterSpacing=d.toFixed(3)+'px';s.style.marginRight=(-d).toFixed(3)+'px';
 }});
</script>
</body>
</html>
